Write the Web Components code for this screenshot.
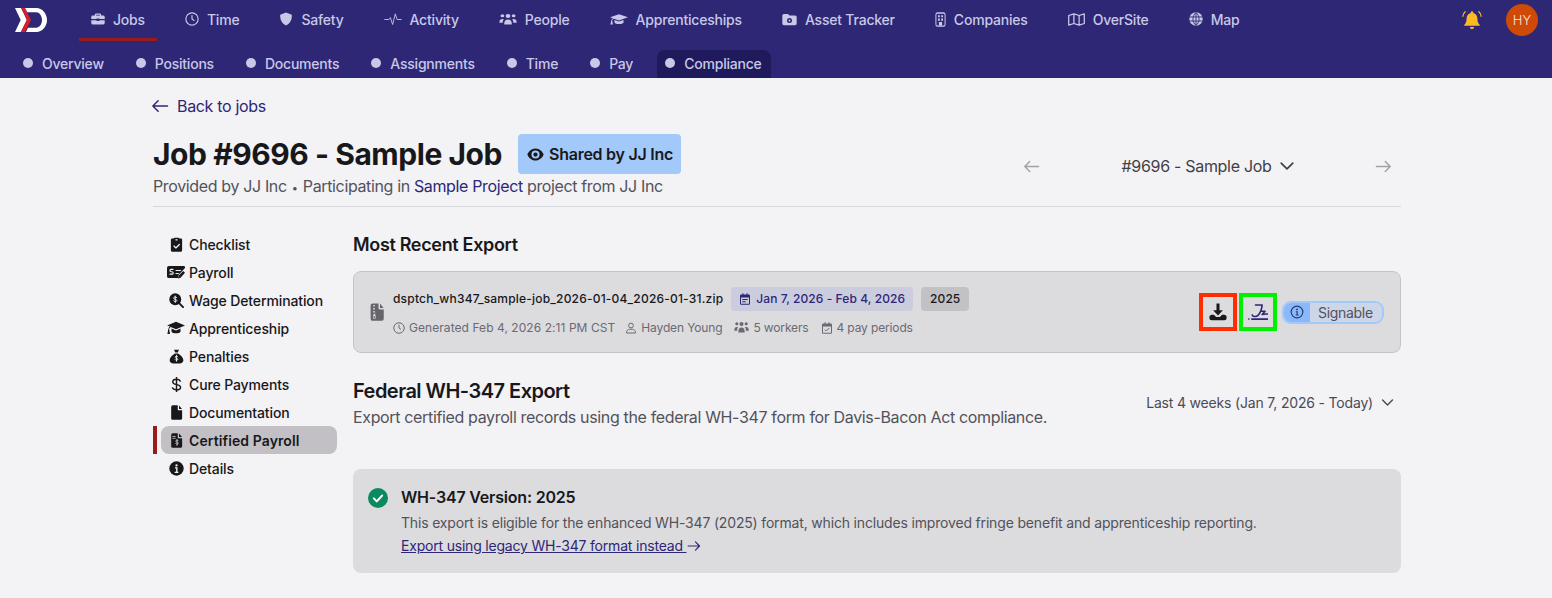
<!DOCTYPE html>
<html>
<head>
<meta charset="utf-8">
<title>Job #9696</title>
<style>
html, body { margin: 0; background: #f3f2f5; }
body { font-family: Inter, "Liberation Sans", sans-serif; color: #18181b; height: 598px; overflow: hidden; }
</style>
</head>
<body>
<dsp-topnav></dsp-topnav>
<dsp-subnav></dsp-subnav>
<job-page></job-page>

<script>
const ICONS = {
  briefcase: '<path fill="currentColor" d="M9 2.500h6A2.500 2.500 0 0 1 17.500 5v1H21a2.500 2.500 0 0 1 2.500 2.500V12h-9v-1h-5v1H.5V8.500A2.500 2.500 0 0 1 3 6h3.500V5A2.500 2.500 0 0 1 9 2.500zm0 2a.5.5 0 0 0-.5.5v1h7V5a.5.5 0 0 0-.5-.5zM.5 14h9v1.500h5V14h9v5a2.500 2.500 0 0 1-2.500 2.500H3A2.500 2.500 0 0 1 .5 19z"/>',
  clock: '<circle cx="12" cy="12" r="10.500" fill="none" stroke="currentColor" stroke-width="2"/><path d="M12 6v6l3.500 2.500" fill="none" stroke="currentColor" stroke-width="2" stroke-linecap="round"/>',
  shield: '<path fill="currentColor" d="M12 1l10 3.800c.3 7.200-2 14.700-10 18.200C4 19.500 1.700 12 2 4.800z"/>',
  activity: '<path d="M.5 12h6l2-3 3 11 3.500-17 2.500 9h6" fill="none" stroke="currentColor" stroke-width="1.300" stroke-linejoin="round"/>',
  people: '<g fill="currentColor"><circle cx="12" cy="6.500" r="3.200"/><circle cx="4.500" cy="6" r="2.500"/><circle cx="19.500" cy="6" r="2.500"/><path d="M7 18c0-3.500 2-6 5-6s5 2.500 5 6v2H7zM.5 16c0-3 1.500-5 4-5 .8 0 1.500.2 2 .6C5.300 13 5 15 5 17H.5zM23.500 16c0-3-1.500-5-4-5-.8 0-1.500.2-2 .6 1.200 1.400 1.500 3.400 1.500 5.400h4.500z"/></g>',
  capsolid: '<path fill="currentColor" d="M12 3.500L24 8.500 12 13.500 5 10.600c-1.400.8-2 2-2.200 3.400.5.4.7 1.200.4 1.800L4 20H.5l.9-4.300c-.3-.6-.1-1.300.4-1.700.2-1.900 1-3.300 2.200-4.200L0 8.500z"/><path fill="currentColor" d="M6 12.800l6 2.500 6-2.500V17c-1.500 2.800-10.500 2.800-12 0z"/>',
  folder: '<path fill-rule="evenodd" fill="currentColor" d="M3 3h6.500l2.500 2.500h9A2.500 2.500 0 0 1 23.500 8v10.500A2.500 2.500 0 0 1 21 21H3A2.500 2.500 0 0 1 .5 18.500v-13A2.500 2.500 0 0 1 3 3zm9 6.500a4 4 0 1 0 0 8 4 4 0 0 0 0-8zm0 2.500a1.500 1.500 0 1 1 0 3 1.500 1.500 0 0 1 0-3z"/>',
  building: '<rect x="2" y="1.500" width="20" height="21" rx="3" fill="none" stroke="currentColor" stroke-width="2.200"/><path fill="currentColor" d="M6.500 5h4v3.500h-4zm7 0h4v3.500h-4zM6.500 10.500h4V14h-4zm7 0h4V14h-4zM8.500 16h7v6h-7z"/>',
  map: '<path d="M1 5.500l7.300-2.500 7.400 2.500L23 3v15.500L15.700 21l-7.400-2.500L1 21zM8.300 3v15.500M15.700 5.500V21" fill="none" stroke="currentColor" stroke-width="1.800" stroke-linejoin="round"/>',
  globe: '<circle cx="12" cy="12" r="11.500" fill="currentColor"/><path d="M1 8.500h22M1 15.500h22M12 1v22M12 1c-7 6-7 16 0 22M12 1c7 6 7 16 0 22" fill="none" stroke="#2d2776" stroke-width="1.500"/>',
  clipboard: '<path fill="currentColor" d="M9 1h6a1.500 1.500 0 0 1 1.500 1.500H19A2 2 0 0 1 21 4.500V21a2.500 2.500 0 0 1-2.500 2.500h-13A2.500 2.500 0 0 1 3 21V4.500A2 2 0 0 1 5 2.500h2.500A1.500 1.500 0 0 1 9 1z"/><path d="M8 14.500l3 3 5.500-5.500" fill="none" stroke="#f3f2f5" stroke-width="2" stroke-linecap="round" stroke-linejoin="round"/><rect x="10" y="3.500" width="4" height="2" rx="1" fill="#f3f2f5"/>',
  moneycheck: '<path fill="currentColor" d="M2.500 4h20A1.500 1.500 0 0 1 24 5.500v1.300l-8.500 9-1 4.200H2.500A2.500 2.500 0 0 1 0 17.500v-11A2.500 2.500 0 0 1 2.500 4z"/><path d="M8 8.500H5.500a1.300 1.300 0 0 0 0 3.200h1.200a1.300 1.300 0 0 1 0 3.200H4M12 10h6M12 14h3" fill="none" stroke="#f3f2f5" stroke-width="1.500" stroke-linecap="round"/><path fill="currentColor" d="M21.500 10.500l2.500 2.500-6 6.500-3.500 1 1-3.500z"/>',
  searchdollar: '<circle cx="10" cy="10" r="9.500" fill="currentColor"/><path d="M16.500 16.500l6 6" stroke="currentColor" stroke-width="3" stroke-linecap="round"/><path d="M12.500 7.500c-.5-.8-1.500-1.200-2.500-1.200-1.400 0-2.500.7-2.500 1.900 0 2.600 5 1.200 5 3.700 0 1.200-1.100 1.900-2.500 1.900-1 0-2-.4-2.500-1.200M10 5v10" fill="none" stroke="#f3f2f5" stroke-width="1.500" stroke-linecap="round"/>',
  moneybag: '<path fill="currentColor" d="M8 1h8l-2 4.500h-4zM9.500 7h5C19 9.500 23 14 23 18c0 3.200-2.500 5-6 5H7c-3.500 0-6-1.800-6-5 0-4 4-8.500 8.500-11z"/><path d="M14.200 12.500c-.4-.7-1.200-1-2.200-1-1.200 0-2.200.6-2.200 1.600 0 2.300 4.400 1 4.400 3.300 0 1-1 1.600-2.200 1.600-1 0-1.800-.3-2.200-1M12 10v9.500" fill="none" stroke="#f3f2f5" stroke-width="1.400" stroke-linecap="round"/>',
  dollar: '<path d="M18 6.500C17 4.500 14.800 3.500 12 3.500c-3.500 0-6 1.700-6 4.300 0 5.800 12.500 2.900 12.500 8.400 0 2.700-2.800 4.300-6.500 4.300-3 0-5.300-1-6.500-3M12 .5v23" fill="none" stroke="currentColor" stroke-width="2.300" stroke-linecap="round"/>',
  file: '<path fill="currentColor" d="M6 .5h8v6.500a1.500 1.500 0 0 0 1.500 1.500H21V21a2.500 2.500 0 0 1-2.500 2.500h-12A2.500 2.500 0 0 1 3.500 21V3A2.500 2.500 0 0 1 6 .5zM16 .8L20.800 6.500H16z"/>',
  filedollar: '<path fill="currentColor" d="M6 .5h8v6.500a1.500 1.500 0 0 0 1.500 1.500H21V21a2.500 2.500 0 0 1-2.500 2.500h-12A2.500 2.500 0 0 1 3.500 21V3A2.500 2.500 0 0 1 6 .5zM16 .8L20.800 6.500H16z"/><path d="M15 12.500c-.4-.7-1.200-1-2.200-1-1.200 0-2.100.6-2.100 1.500 0 2.300 4.300 1 4.300 3.300 0 1-.9 1.600-2.200 1.600-1 0-1.800-.3-2.200-1M12.800 10v10M6 5.500h4M6 8.500h4" fill="none" stroke="#c2c0c4" stroke-width="1.400" stroke-linecap="round"/>',
  info: '<circle cx="12" cy="12" r="11.500" fill="currentColor"/><circle cx="12" cy="7" r="1.800" fill="#f3f2f5"/><path d="M9.500 11h3v7M9 18.200h6" fill="none" stroke="#f3f2f5" stroke-width="2.200"/>',
  filezip: '<path fill="currentColor" fill-rule="evenodd" d="M6 .5h8v6.500a1.500 1.500 0 0 0 1.500 1.500H21V21a2.500 2.500 0 0 1-2.500 2.500h-12A2.500 2.500 0 0 1 3.500 21V3A2.500 2.500 0 0 1 6 .5zM7 2.500v2h2v-2zM7 6.500v2h2v-2zM7 10.500v2h2v2H7.500L6.500 19a2 2 0 0 0 4 0l-1-4.500V12.500H9v-2zM8.500 17.500a1.300 1.300 0 1 1 0 2.600 1.300 1.300 0 0 1 0-2.600zM16 .8L20.800 6.500H16z"/>',
  user: '<circle cx="12" cy="7" r="4.800" fill="none" stroke="currentColor" stroke-width="2"/><path d="M3 22c0-5 3-7.500 6-7.500h6c3 0 6 2.500 6 7.500z" fill="none" stroke="currentColor" stroke-width="2" stroke-linejoin="round"/>',
  calendar: '<path fill="currentColor" d="M7 .5h2v2.500h6V.5h2V3h2.500A2.500 2.500 0 0 1 22 5.500V21a2.500 2.500 0 0 1-2.500 2.500h-15A2.500 2.500 0 0 1 2 21V5.500A2.500 2.500 0 0 1 4.500 3H7zM4 9v12a.5.5 0 0 0 .5.5h15a.5.5 0 0 0 .5-.5V9z"/><path d="M6.500 13h11M6.500 17.500h7" stroke="currentColor" stroke-width="2"/>',
  calcheck: '<path fill="currentColor" d="M7 .5h2v2.500h6V.5h2V3h2.500A2.500 2.500 0 0 1 22 5.500V21a2.500 2.500 0 0 1-2.500 2.500h-15A2.500 2.500 0 0 1 2 21V5.500A2.500 2.500 0 0 1 4.500 3H7zM4 9v12a.5.5 0 0 0 .5.5h15a.5.5 0 0 0 .5-.5V9z"/><path d="M7.500 15l3 3 6-6" fill="none" stroke="currentColor" stroke-width="2"/>',
  download: '<path fill="currentColor" d="M10 .5h4v9h4.500L12 16.500 5.500 9.500H10z"/><path fill="currentColor" d="M.5 19a3.500 3.500 0 0 1 3.500-3.500h2.500l3 3h5l3-3H20a3.500 3.500 0 0 1 3.500 3.500v1a3 3 0 0 1-3 3h-17a3 3 0 0 1-3-3z"/>',
  signature: '<circle cx="1" cy="20.500" r="1" fill="currentColor"/><path d="M4.500 20.500h19M9 3.500h8c-.5 5-2 9.500-5 12.500-2 2-6.500 2-7-.5M16 11h4.500L17 15c2.500-.8 3.500-.8 6.500-.5" fill="none" stroke="currentColor" stroke-width="1.900" stroke-linecap="round" stroke-linejoin="round"/>',
  infoline: '<circle cx="12" cy="12" r="10" fill="none" stroke="currentColor" stroke-width="2"/><circle cx="12" cy="7.500" r="1.500" fill="currentColor"/><path d="M10 11.500h2.300V17M10 17.200h4.500" fill="none" stroke="currentColor" stroke-width="2"/>',
  chevron: '<path d="M5 8.500l7 7 7-7" fill="none" stroke="currentColor" stroke-width="2" stroke-linecap="round" stroke-linejoin="round"/>',
  left: '<path d="M22 12H2.500M9.500 5l-7 7 7 7" fill="none" stroke="currentColor" stroke-width="2" stroke-linecap="round" stroke-linejoin="round"/>',
  right: '<path d="M2 12h19.500M14.500 5l7 7-7 7" fill="none" stroke="currentColor" stroke-width="2" stroke-linecap="round" stroke-linejoin="round"/>',
  checkcircle: '<circle cx="12" cy="12" r="12" fill="#0b8a60"/><path d="M7 12.500l3.500 3.500L17 9" fill="none" stroke="#fff" stroke-width="2.400" stroke-linecap="round" stroke-linejoin="round"/>',
  bell: '<path fill="currentColor" d="M12 1.500a1.500 1.500 0 0 1 1.500 1.500v.6c3.300.7 5 3.500 5 6.900 0 3 .7 5.200 2.500 7 .6.600.3 1.500-.5 1.500H3.500c-.8 0-1.100-.9-.5-1.500 1.800-1.800 2.500-4 2.500-7 0-3.400 1.700-6.200 5-6.900V3A1.500 1.500 0 0 1 12 1.500zM9.500 20.500h5a2.500 2.500 0 0 1-5 0z"/><path d="M3.800 2C2 3.500 1.200 5.500 1 7.500M20.200 2C22 3.500 22.800 5.500 23 7.500" fill="none" stroke="currentColor" stroke-width="1.500" stroke-linecap="round"/>',
  eye: '<path fill-rule="evenodd" fill="currentColor" d="M12 3.500c6 0 10 4.500 11.500 8.500C22 16 18 20.500 12 20.500S2 16 .5 12C2 8 6 3.500 12 3.500zm0 2.800a5.700 5.700 0 1 0 0 11.400 5.700 5.700 0 0 0 0-11.400zM12 9a3 3 0 1 1 0 6 3 3 0 0 1 0-6z"/>'
};

function icon(name, w, h) {
  const par = h ? 'preserveAspectRatio="none"' : '';
  return `<svg viewBox="0 0 24 24" width="${w}" height="${h || w}" ${par} style="flex:none;display:block">${ICONS[name]}</svg>`;
}

class DspTopnav extends HTMLElement {
  constructor() {
    super();
    const items = [
      ['briefcase', 'Jobs', 14, true], ['clock', 'Time', 14], ['shield', 'Safety', 14], ['activity', 'Activity', 18],
      ['people', 'People', 18], ['capsolid', 'Apprenticeships', 18], ['folder', 'Asset Tracker', 15],
      ['building', 'Companies', 11], ['map', 'OverSite', 17], ['globe', 'Map', 14]
    ];
    this.attachShadow({ mode: 'open' }).innerHTML = `
    <style>
      :host { display: flex; align-items: flex-start; height: 41px; background: #2d2776; padding-left: 15px; padding-right: 14px; }
      .logo { margin-top: 8px; margin-right: 32px; flex: none; }
      nav { display: flex; gap: 16px; }
      a { display: flex; align-items: center; gap: 8px; height: 38px; padding: 0 12px; border-bottom: 3px solid transparent;
        color: #c9c8e6; font-size: 14px; font-weight: 500; letter-spacing: -0.2px; }
      a.on { border-bottom-color: #991b1b; }
      .right { margin-left: auto; display: flex; align-items: center; gap: 24px; height: 40px; }
      .bell { color: #fdb924; }
      .avatar { width: 32px; height: 32px; border-radius: 50%; background: #cf4a06; color: #fbe6d8; font-size: 13px; font-weight: 300;
        display: flex; align-items: center; justify-content: center; }
    </style>
    <svg class="logo" width="32" height="24" viewBox="0 0 32 24">
      <path fill="#fff" d="M0 0h6l6 12-6 12H0l5.700-12z"/>
      <path fill="#d3202a" d="M6.700 0H10l6 12-6 12H5.700l6-12z"/>
      <path fill="#fff" d="M10 0h11.500C27 0 32 5.500 32 12s-5 12-10.500 12H11l2-4.300h8.300c3 0 5.700-3.500 5.700-7.700s-2.700-7.700-5.700-7.700h-9z"/>
    </svg>
    <nav>${items.map(([i, t, w, on]) => `<a class="${on ? 'on' : ''}">${icon(i, w, w === 14 ? 0 : 15)}${t}</a>`).join('')}</nav>
    <div class="right">
      <span class="bell">${icon('bell', 20)}</span>
      <span class="avatar">HY</span>
    </div>`;
  }
}
customElements.define('dsp-topnav', DspTopnav);

class DspSubnav extends HTMLElement {
  constructor() {
    super();
    const items = ['Overview', 'Positions', 'Documents', 'Assignments', 'Time', 'Pay', 'Compliance'];
    this.attachShadow({ mode: 'open' }).innerHTML = `
    <style>
      :host { display: flex; height: 37px; box-sizing: border-box; padding: 9px 0 0 15px; background: #2d2776; gap: 16px; }
      a { display: flex; align-items: center; gap: 9px; height: 28px; padding: 0 8px 2px; box-sizing: border-box; color: #c9c8e6; font-size: 14px; font-weight: 500; letter-spacing: -0.22px; border-radius: 8px 8px 0 0; }
      a i { width: 10px; height: 10px; border-radius: 50%; background: #c9c8e6; flex: none; }
      a.on { background: #1f1a5c; padding-right: 9px; }
    </style>
    ${items.map(t => `<a class="${t === 'Compliance' ? 'on' : ''}"><i></i>${t}</a>`).join('')}`;
  }
}
customElements.define('dsp-subnav', DspSubnav);

class JobHeader extends HTMLElement {
  constructor() {
    super();
    this.attachShadow({ mode: 'open' }).innerHTML = `
    <style>
      :host { display: block; border-bottom: 1px solid #d8d7db; height: 129px; box-sizing: border-box; }
      .back { display: flex; align-items: center; gap: 8px; color: #2d2776; font-size: 16px; letter-spacing: -0.33px; height: 24px; padding-top: 16px; }
      .back svg { margin-left: -2px; }
      .row { display: flex; justify-content: space-between; margin-top: 16px; }
      .title { display: flex; align-items: center; gap: 16px; }
      h1 { margin: 0; font-size: 30px; font-weight: 700; line-height: 40px; color: #18181b; letter-spacing: -0.45px; }
      .badge { display: flex; align-items: center; gap: 5px; height: 40px; padding: 0 8px 0 9px; background: #a3c9fb; border-radius: 4px; font-size: 16px; font-weight: 600; letter-spacing: -0.25px; color: #18181b; }
      p { margin: 0; font-size: 16px; line-height: 24px; letter-spacing: -0.36px; color: #52525b; }
      p a { color: #2d2776; }
      p small { font-size: 11px; margin: 0 1px; }
      .pager { display: flex; align-items: center; width: 385px; margin-top: 12px; height: 40px; justify-content: space-between; color: #a1a1aa; box-sizing: border-box; padding-right: 9px; padding-left: 7px; }
      .pick { display: flex; align-items: center; gap: 5px; padding-left: 3px; color: #3f3f46; font-size: 16px; letter-spacing: -0.3px; }
    </style>
    <div class="back">${icon('left', 18)}Back to jobs</div>
    <div class="row">
      <div>
        <div class="title"><h1>Job #9696 - Sample Job</h1><span class="badge">${icon('eye', 17)}Shared by JJ Inc</span></div>
        <p>Provided by JJ Inc <small>•</small> Participating in <a>Sample Project</a> project from JJ Inc</p>
      </div>
      <div class="pager">${icon('left', 17)}<span class="pick">#9696 - Sample Job ${icon('chevron', 20)}</span>${icon('right', 17)}</div>
    </div>`;
  }
}
customElements.define('job-header', JobHeader);

class SideItem extends HTMLElement {
  static get observedAttributes() { return ['icon']; }
  constructor() {
    super();
    this.attachShadow({ mode: 'open' }).innerHTML = `
    <style>
      :host { display: flex; align-items: center; gap: 4px; height: 28px; margin-left: 8px; padding-left: 6px; border-radius: 8px; font-size: 14px; font-weight: 500; letter-spacing: -0.12px; color: #18181b; position: relative; }
      :host([active]) { background: #c2c0c4; font-weight: 600; letter-spacing: 0.1px; }
      :host([active])::before { content: ""; position: absolute; left: -8px; top: 0; bottom: 0; width: 4px; background: #991b1b; }
      .ic { width: 18px; display: flex; justify-content: center; flex: none; }
    </style>
    <span class="ic"></span><slot></slot>`;
  }
  attributeChangedCallback(n, o, v) {
    const wide = v === 'moneycheck' || v === 'capsolid';
    this.shadowRoot.querySelector('.ic').innerHTML = icon(v, wide ? 18 : 15);
  }
}
customElements.define('side-item', SideItem);

class ExportCard extends HTMLElement {
  constructor() {
    super();
    this.attachShadow({ mode: 'open' }).innerHTML = `
    <style>
      :host { display: flex; align-items: center; height: 82px; box-sizing: border-box; background: #dcdbde; border: 1px solid #c5c4c8; border-radius: 8px; padding: 0 16px 0 14px; }
      .fileic { color: #66656b; margin-right: 7px; }
      .info { margin-top: 2px; }
      .l1 { display: flex; align-items: center; gap: 8px; font-size: 12px; font-weight: 500; color: #18181b; letter-spacing: 0.2px; }
      .chip { display: flex; align-items: center; gap: 5px; height: 24px; padding: 0 8px; border-radius: 4px; letter-spacing: 0.08px; }
      .date { background: #ccccdf; color: #2d2776; }
      .year { background: #c2c1c5; padding: 0 9px; }
      .l2 { display: flex; gap: 12px; margin-top: 5px; font-size: 12px; color: #6b6a72; height: 24px; align-items: center; letter-spacing: -0.14px; }
      .l2 span { display: flex; align-items: center; gap: 4px; }
      .l2 span:first-child { letter-spacing: 0.06px; margin-right: -2px; }
      .acts { margin-left: auto; display: flex; align-items: center; gap: 2px; }
      .btn { width: 38px; height: 38px; box-sizing: border-box; border: 4px solid; display: flex; align-items: center; justify-content: center; }
      .dl { border-color: #ff2d00; color: #18181b; }
      .sg { border-color: #00f000; color: #2d2776; }
      .pill { display: flex; margin-left: 3px; height: 23px; box-sizing: border-box; border: 2px solid #a3c9fb; border-radius: 9px; overflow: hidden; font-size: 14px; letter-spacing: -0.3px; color: #52525b; align-items: stretch; }
      .pill b { font-weight: 400; width: 26px; background: #8ab9fb; display: flex; align-items: center; justify-content: center; color: #2d3a70; }
      .pill span { background: #cdd5e8; padding: 0 0 0 8px; box-sizing: border-box; display: flex; align-items: center; width: 72px; }
    </style>
    <span class="fileic">${icon('filezip', 18)}</span>
    <div class="info">
      <div class="l1">dsptch_wh347_sample-job_2026-01-04_2026-01-31.zip
        <span class="chip date">${icon('calendar', 12)}Jan 7, 2026 - Feb 4, 2026</span>
        <span class="chip year">2025</span></div>
      <div class="l2">
        <span>${icon('clock', 12)}Generated Feb 4, 2026 2:11 PM CST</span>
        <span>${icon('user', 12)}Hayden Young</span>
        <span>${icon('people', 15)}5 workers</span>
        <span>${icon('calcheck', 12)}4 pay periods</span>
      </div>
    </div>
    <div class="acts">
      <div class="btn dl">${icon('download', 18)}</div>
      <div class="btn sg">${icon('signature', 20)}</div>
      <div class="pill"><b>${icon('infoline', 14)}</b><span>Signable</span></div>
    </div>`;
  }
}
customElements.define('export-card', ExportCard);

class VersionAlert extends HTMLElement {
  constructor() {
    super();
    this.attachShadow({ mode: 'open' }).innerHTML = `
    <style>
      :host { display: flex; gap: 13px; height: 104px; box-sizing: border-box; padding: 16px 16px 0 15px; background: #dcdbde; border-radius: 8px; }
      h3 { margin: 0; font-size: 16px; font-weight: 600; line-height: 24px; letter-spacing: -0.2px; color: #18181b; }
      p { margin: 3px 0 0; font-size: 14px; line-height: 22px; letter-spacing: -0.17px; color: #52525b; }
      a { display: inline-flex; align-items: center; font-size: 14px; line-height: 24px; letter-spacing: -0.2px; color: #2d2776; }
      u { white-space: pre; }
    </style>
    <span style="margin-top:3px">${icon('checkcircle', 20)}</span>
    <div>
      <h3>WH-347 Version: 2025</h3>
      <p>This export is eligible for the enhanced WH-347 (2025) format, which includes improved fringe benefit and apprenticeship reporting.</p>
      <a><u>Export using legacy WH-347 format instead </u>${icon('right', 14)}</a>
    </div>`;
  }
}
customElements.define('version-alert', VersionAlert);

class JobPage extends HTMLElement {
  constructor() {
    super();
    this.attachShadow({ mode: 'open' }).innerHTML = `
    <style>
      :host { display: block; width: 1248px; margin-left: 153px; }
      .cols { display: flex; margin-top: 23px; }
      aside { width: 184px; margin-right: 16px; flex: none; }
      main { flex: 1; min-width: 0; }
      .recent { margin: 1px 0 12px; font-size: 18px; font-weight: 600; line-height: 28px; letter-spacing: -0.33px; }
      .fed { display: flex; justify-content: space-between; margin: 24px 0 0; height: 92px; }
      .fed h2 { font-size: 20px; font-weight: 600; line-height: 28px; letter-spacing: -0.52px; margin: 0; }
      .fed p { margin: 0; font-size: 16px; line-height: 24px; letter-spacing: -0.35px; color: #52525b; }
      .range { display: flex; align-items: center; gap: 6px; height: 40px; margin-top: 5px; padding-right: 5px; font-size: 14px; letter-spacing: -0.18px; color: #4b4b55; }
    </style>
    <job-header></job-header>
    <div class="cols">
      <aside>
        <side-item icon="clipboard">Checklist</side-item>
        <side-item icon="moneycheck">Payroll</side-item>
        <side-item icon="searchdollar">Wage Determination</side-item>
        <side-item icon="capsolid">Apprenticeship</side-item>
        <side-item icon="moneybag">Penalties</side-item>
        <side-item icon="dollar">Cure Payments</side-item>
        <side-item icon="file">Documentation</side-item>
        <side-item icon="filedollar" active>Certified Payroll</side-item>
        <side-item icon="info">Details</side-item>
      </aside>
      <main>
        <h2 class="recent">Most Recent Export</h2>
        <export-card></export-card>
        <div class="fed">
          <div><h2>Federal WH-347 Export</h2>
          <p>Export certified payroll records using the federal WH-347 form for Davis-Bacon Act compliance.</p></div>
          <div class="range">Last 4 weeks (Jan 7, 2026 - Today) ${icon('chevron', 17)}</div>
        </div>
        <version-alert></version-alert>
      </main>
    </div>`;
  }
}
customElements.define('job-page', JobPage);
</script>
</body>
</html>
